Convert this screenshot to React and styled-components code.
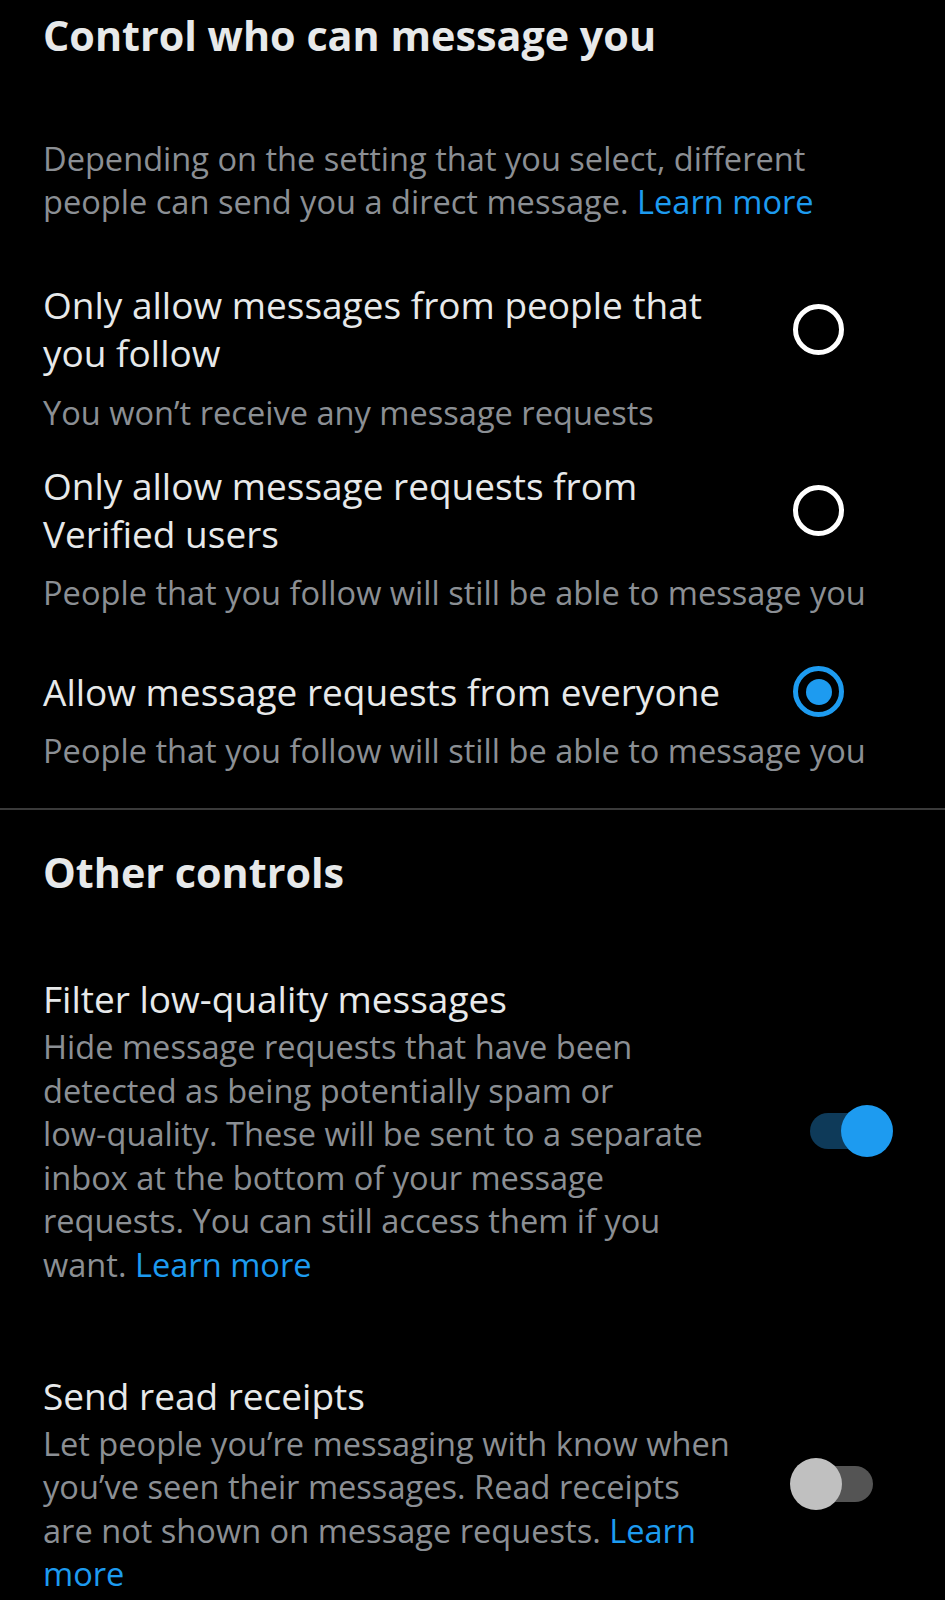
import React from "react";
import styled, { createGlobalStyle } from "styled-components";

const GlobalStyle = createGlobalStyle`
  html, body {
    margin: 0;
    padding: 0;
    background: #000;
  }
  body {
    font-family: "Open Sans", "Noto Sans", Arial, sans-serif;
    -webkit-font-smoothing: antialiased;
  }
  * { box-sizing: border-box; }
`;

const Page = styled.main`
  background: #000;
  min-height: 1600px;
  padding-top: 9px;
  overflow: hidden;
`;

const Section = styled.section`
  padding: 0 52px 0 43px;
`;

const SectionTitle = styled.h2`
  margin: 0;
  margin-top: ${(p) => p.$space || 0}px;
  font-size: 41.3px;
  line-height: 52px;
  font-weight: 700;
  color: #e7e9ea;
`;

const Intro = styled.p`
  margin: 76px 0 0;
  max-width: 790px;
  font-size: 32.6px;
  line-height: 43px;
  color: #8b8f94;
`;

const Link = styled.a`
  color: #1d9bf0;
  text-decoration: none;
  cursor: pointer;
`;

const NoWrap = styled.span`
  white-space: nowrap;
`;

const Option = styled.div`
  margin-top: ${(p) => p.$space}px;
`;

const OptionHead = styled.label`
  display: flex;
  align-items: center;
  justify-content: space-between;
  padding-right: 49px;
  cursor: pointer;
`;

const OptionTitle = styled.div`
  max-width: 690px;
  font-size: 37px;
  line-height: 48px;
  color: #e7e9ea;
`;

const Hint = styled.div`
  margin-top: ${(p) => p.$space || 0}px;
  font-size: 32.6px;
  line-height: 43px;
  color: #8b8f94;
  white-space: nowrap;
`;

const Radio = styled.span`
  flex: none;
  width: 51px;
  height: 51px;
  border-radius: 50%;
  border: 5px solid ${(p) => (p.$checked ? "#1d9bf0" : "#ffffff")};
  display: flex;
  align-items: center;
  justify-content: center;

  &::after {
    content: "";
    display: ${(p) => (p.$checked ? "block" : "none")};
    width: 26px;
    height: 26px;
    border-radius: 50%;
    background: #1d9bf0;
  }
`;

const Divider = styled.hr`
  margin: 36px 0 0;
  border: 0;
  height: 2px;
  background: #3a3a3a;
`;

const SwitchRow = styled.div`
  display: flex;
  align-items: center;
  justify-content: space-between;
  margin-top: ${(p) => p.$space}px;
`;

const SwitchText = styled.div`
  max-width: 692px;
`;

const SwitchTitle = styled.div`
  font-size: 37px;
  line-height: 48px;
  color: #e7e9ea;
`;

const SwitchDesc = styled.div`
  margin-top: 2px;
  font-size: 32.6px;
  line-height: 43.6px;
  color: #8b8f94;
`;

const Switch = styled.span`
  position: relative;
  flex: none;
  width: 103px;
  height: 52px;
`;

const Track = styled.span`
  position: absolute;
  left: 20px;
  right: 20px;
  top: 8px;
  height: 36px;
  border-radius: 18px;
  background: ${(p) => (p.$on ? "#0e3a59" : "#545454")};
`;

const Thumb = styled.span`
  position: absolute;
  top: 0;
  ${(p) => (p.$on ? "right: 0;" : "left: 0;")}
  width: 52px;
  height: 52px;
  border-radius: 50%;
  background: ${(p) => (p.$on ? "#1d9bf0" : "#c0c0c0")};
`;

function Toggle({ on }) {
  return (
    <Switch role="switch" aria-checked={on}>
      <Track $on={on} />
      <Thumb $on={on} />
    </Switch>
  );
}

const options = [
  {
    title: "Only allow messages from people that you follow",
    hint: "You won’t receive any message requests",
    space: 58,
    hintSpace: 14,
    checked: false,
  },
  {
    title: "Only allow message requests from Verified users",
    hint: "People that you follow will still be able to message you",
    space: 28,
    hintSpace: 13,
    checked: false,
  },
  {
    title: "Allow message requests from everyone",
    hint: "People that you follow will still be able to message you",
    space: 52,
    hintSpace: 12,
    checked: true,
  },
];

export default function App() {
  return (
    <>
      <GlobalStyle />
      <Page>
        <Section>
          <SectionTitle>Control who can message you</SectionTitle>
          <Intro>
            Depending on the setting that you select, different people can send
            you a direct message. <Link>Learn more</Link>
          </Intro>
          {options.map((o) => (
            <Option key={o.title} $space={o.space}>
              <OptionHead>
                <OptionTitle>{o.title}</OptionTitle>
                <Radio $checked={o.checked} />
              </OptionHead>
              <Hint $space={o.hintSpace}>{o.hint}</Hint>
            </Option>
          ))}
        </Section>
        <Divider />
        <Section>
          <SectionTitle $space={36}>Other controls</SectionTitle>
          <SwitchRow $space={77}>
            <SwitchText>
              <SwitchTitle>Filter low-quality messages</SwitchTitle>
              <SwitchDesc>
                Hide message requests that have been detected as being
                potentially spam or <NoWrap>low-quality.</NoWrap> These will be
                sent to a separate inbox at the bottom of your message requests.
                You can still access them if you want. <Link>Learn more</Link>
              </SwitchDesc>
            </SwitchText>
            <Toggle on />
          </SwitchRow>
          <SwitchRow $space={85}>
            <SwitchText>
              <SwitchTitle>Send read receipts</SwitchTitle>
              <SwitchDesc>
                Let people you’re messaging with know when you’ve seen their
                messages. Read receipts are not shown on message requests.{" "}
                <Link>Learn more</Link>
              </SwitchDesc>
            </SwitchText>
            <Toggle on={false} />
          </SwitchRow>
        </Section>
      </Page>
    </>
  );
}
